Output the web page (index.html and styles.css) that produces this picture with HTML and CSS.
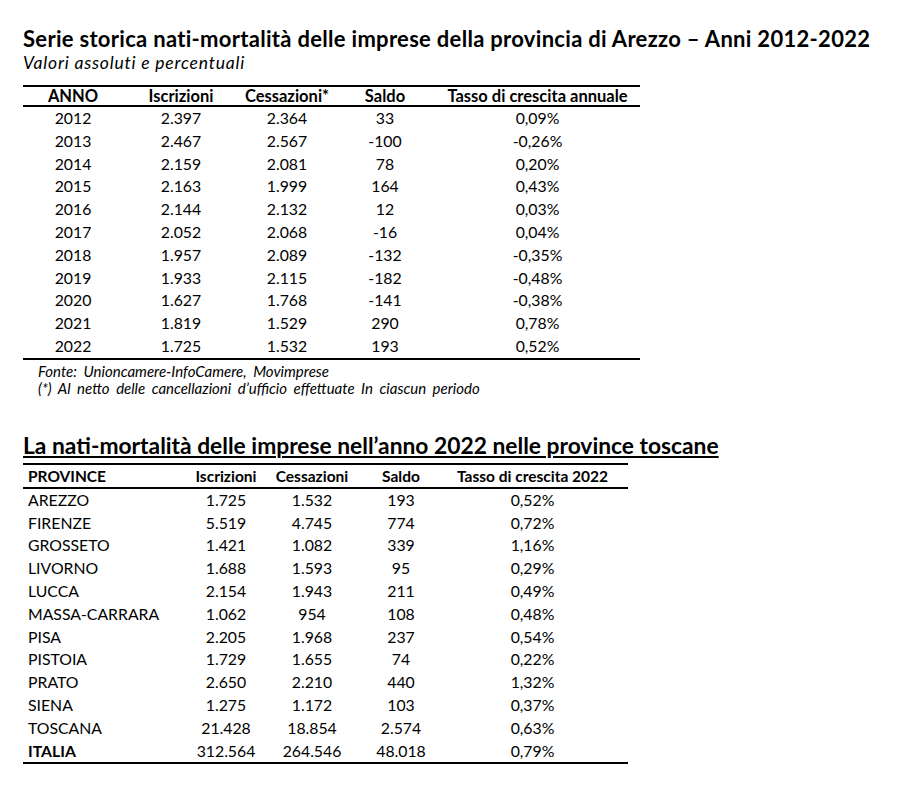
FILE: index.html
```html
<!DOCTYPE html>
<html lang="it">
<head>
<meta charset="utf-8">
<title>Nati-mortalità imprese Arezzo</title>
<link rel="stylesheet" href="styles.css">
</head>
<body>
<main class="page">
  <section class="block">
    <h1 class="title">Serie storica nati-mortalità delle imprese della provincia di Arezzo – Anni 2012-2022</h1>
    <p class="subtitle">Valori assoluti e percentuali</p>
    <table class="tbl tbl-serie">
      <colgroup>
        <col class="c1"><col class="c2"><col class="c3"><col class="c4"><col class="c5">
      </colgroup>
      <thead>
        <tr><th>ANNO</th><th>Iscrizioni</th><th>Cessazioni*</th><th>Saldo</th><th>Tasso di crescita annuale</th></tr>
      </thead>
      <tbody>
        <tr><td>2012</td><td>2.397</td><td>2.364</td><td>33</td><td>0,09%</td></tr>
        <tr><td>2013</td><td>2.467</td><td>2.567</td><td>-100</td><td>-0,26%</td></tr>
        <tr><td>2014</td><td>2.159</td><td>2.081</td><td>78</td><td>0,20%</td></tr>
        <tr><td>2015</td><td>2.163</td><td>1.999</td><td>164</td><td>0,43%</td></tr>
        <tr><td>2016</td><td>2.144</td><td>2.132</td><td>12</td><td>0,03%</td></tr>
        <tr><td>2017</td><td>2.052</td><td>2.068</td><td>-16</td><td>0,04%</td></tr>
        <tr><td>2018</td><td>1.957</td><td>2.089</td><td>-132</td><td>-0,35%</td></tr>
        <tr><td>2019</td><td>1.933</td><td>2.115</td><td>-182</td><td>-0,48%</td></tr>
        <tr><td>2020</td><td>1.627</td><td>1.768</td><td>-141</td><td>-0,38%</td></tr>
        <tr><td>2021</td><td>1.819</td><td>1.529</td><td>290</td><td>0,78%</td></tr>
        <tr><td>2022</td><td>1.725</td><td>1.532</td><td>193</td><td>0,52%</td></tr>
      </tbody>
    </table>
    <div class="notes">
      <p>Fonte: Unioncamere-InfoCamere, Movimprese</p>
      <p>(*) Al netto delle cancellazioni d’ufficio effettuate In ciascun periodo</p>
    </div>
  </section>

  <section class="block block-2">
    <h2 class="title title-2">La nati-mortalità delle imprese nell’anno 2022 nelle province toscane</h2>
    <table class="tbl tbl-prov">
      <colgroup>
        <col class="p1"><col class="p2"><col class="p3"><col class="p4"><col class="p5">
      </colgroup>
      <thead>
        <tr><th class="left">PROVINCE</th><th>Iscrizioni</th><th>Cessazioni</th><th>Saldo</th><th>Tasso di crescita 2022</th></tr>
      </thead>
      <tbody>
        <tr><td class="left">AREZZO</td><td>1.725</td><td>1.532</td><td>193</td><td>0,52%</td></tr>
        <tr><td class="left">FIRENZE</td><td>5.519</td><td>4.745</td><td>774</td><td>0,72%</td></tr>
        <tr><td class="left">GROSSETO</td><td>1.421</td><td>1.082</td><td>339</td><td>1,16%</td></tr>
        <tr><td class="left">LIVORNO</td><td>1.688</td><td>1.593</td><td>95</td><td>0,29%</td></tr>
        <tr><td class="left">LUCCA</td><td>2.154</td><td>1.943</td><td>211</td><td>0,49%</td></tr>
        <tr><td class="left">MASSA-CARRARA</td><td>1.062</td><td>954</td><td>108</td><td>0,48%</td></tr>
        <tr><td class="left">PISA</td><td>2.205</td><td>1.968</td><td>237</td><td>0,54%</td></tr>
        <tr><td class="left">PISTOIA</td><td>1.729</td><td>1.655</td><td>74</td><td>0,22%</td></tr>
        <tr><td class="left">PRATO</td><td>2.650</td><td>2.210</td><td>440</td><td>1,32%</td></tr>
        <tr><td class="left">SIENA</td><td>1.275</td><td>1.172</td><td>103</td><td>0,37%</td></tr>
        <tr><td class="left">TOSCANA</td><td>21.428</td><td>18.854</td><td>2.574</td><td>0,63%</td></tr>
        <tr class="total"><td class="left">ITALIA</td><td>312.564</td><td>264.546</td><td>48.018</td><td>0,79%</td></tr>
      </tbody>
    </table>
  </section>
</main>
</body>
</html>
```

FILE: styles.css
```css
* { box-sizing: border-box; }

html, body {
  margin: 0;
  padding: 0;
  background: #ffffff;
  color: #000000;
  font-family: "Lato", "Liberation Sans", sans-serif;
}

.page {
  padding: 27px 0 0 23px;
}

.title {
  margin: 0;
  font-size: 22px;
  line-height: 24px;
  font-weight: 700;
  letter-spacing: 0.3px;
  white-space: nowrap;
}

.subtitle {
  margin: 2px 0 0;
  font-size: 17.5px;
  line-height: 20px;
  letter-spacing: 0.8px;
  font-style: italic;
}

.tbl {
  border-collapse: collapse;
  table-layout: fixed;
  margin-top: 12px;
  border-top: 2px solid #000;
  border-bottom: 2px solid #000;
}

.tbl th,
.tbl td {
  padding: 0;
  text-align: center;
  white-space: nowrap;
  font-size: 15.8px;
}

.tbl th {
  font-weight: 700;
  border-bottom: 2px solid #000;
}

.tbl td {
  height: 22.8px;
  line-height: 22.8px;
}

.tbl-serie { width: 617px; }
.tbl-serie th { height: 18.5px; line-height: 18px; font-size: 16.5px; }
.tbl-serie .c1 { width: 100px; }
.tbl-serie .c2 { width: 116px; }
.tbl-serie .c3 { width: 96px; }
.tbl-serie .c4 { width: 100px; }
.tbl-serie .c5 { width: 205px; }

.notes {
  margin-top: 3px;
  padding-left: 15px;
  font-size: 15px;
  line-height: 17px;
  word-spacing: 3px;
  font-style: italic;
}

.notes p { margin: 0; }

.block-2 { margin-top: 37px; }

.title-2 {
  font-size: 22.8px;
  line-height: 23px;
  letter-spacing: 0;
  text-decoration: underline;
  text-decoration-thickness: 2px;
  text-underline-offset: 2px;
}

.tbl-prov {
  width: 605px;
  margin-top: 6px;
}

.tbl-prov th { height: 22px; line-height: 22px; font-size: 15.5px; }
.tbl-prov .left { text-align: left; padding-left: 5px; }
.tbl-prov .total td { font-weight: 400; }
.tbl-prov .total td.left { font-weight: 700; }
.tbl-prov .p1 { width: 170px; }
.tbl-prov .p2 { width: 66px; }
.tbl-prov .p3 { width: 106px; }
.tbl-prov .p4 { width: 72px; }
.tbl-prov .p5 { width: 191px; }
```
